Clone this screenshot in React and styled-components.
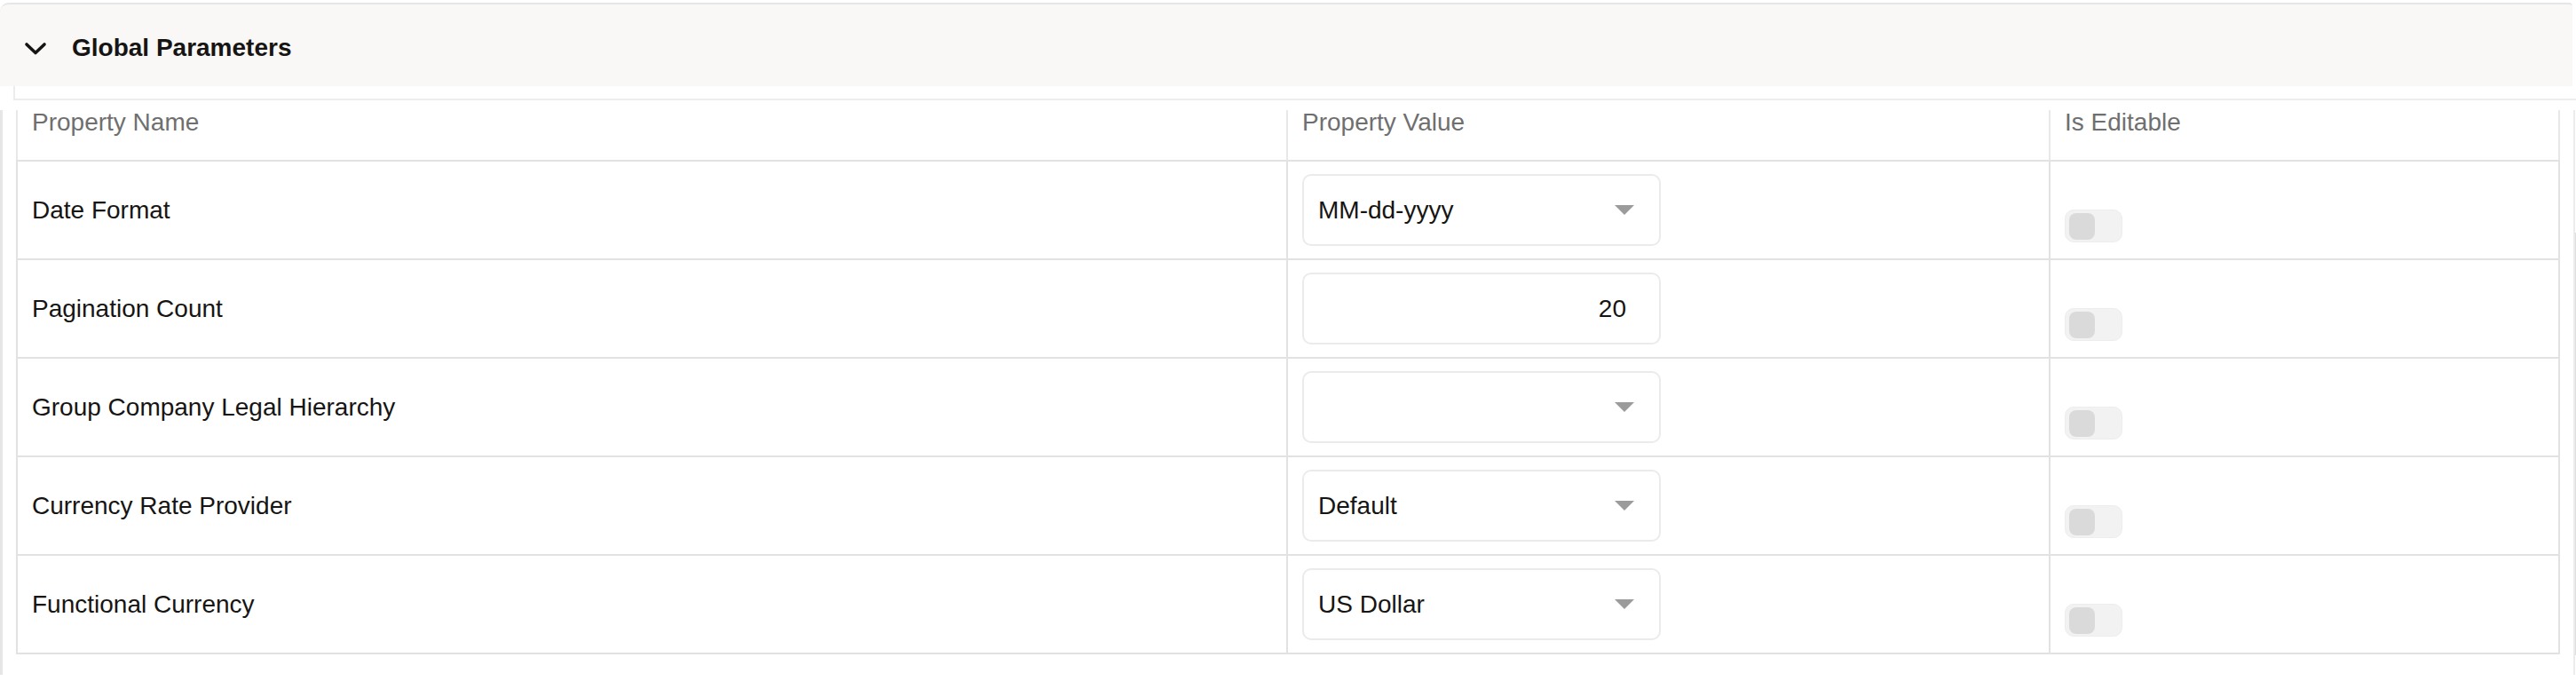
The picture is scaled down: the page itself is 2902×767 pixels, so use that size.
import React from "react";
import styled, { createGlobalStyle } from "styled-components";

const GlobalStyle = createGlobalStyle`
  html, body {
    margin: 0;
    padding: 0;
    background: #ffffff;
    font-family: "Liberation Sans", Arial, sans-serif;
    color: #161513;
  }
`;

const rows = [
  { name: "Date Format", kind: "select", value: "MM-dd-yyyy" },
  { name: "Pagination Count", kind: "number", value: "20" },
  { name: "Group Company Legal Hierarchy", kind: "select", value: "" },
  { name: "Currency Rate Provider", kind: "select", value: "Default" },
  { name: "Functional Currency", kind: "select", value: "US Dollar" },
];

const App = () => {
  return (
    <>
      <GlobalStyle />
      <Section>
        <SectionHeader>
          <Chevron width="26" height="16" viewBox="0 0 26 16">
            <polyline points="3,3 13,12.5 23,3" />
          </Chevron>
          <SectionTitle>Global Parameters</SectionTitle>
        </SectionHeader>

        <StickyEdge />

        <ScrollArea>
          <LeftRail />
          <Table>
            <colgroup>
              <col style={{ width: 1431 }} />
              <col style={{ width: 859 }} />
              <col style={{ width: 574 }} />
            </colgroup>
            <thead>
              <tr>
                <HeadCell>Property Name</HeadCell>
                <HeadCell>Property Value</HeadCell>
                <HeadCell>Is Editable</HeadCell>
              </tr>
            </thead>
            <tbody>
              {rows.map((row) => (
                <tr key={row.name}>
                  <Cell>{row.name}</Cell>
                  <Cell>
                    {row.kind === "number" ? (
                      <Field $align="right">{row.value}</Field>
                    ) : (
                      <Field>
                        <FieldText>{row.value}</FieldText>
                        <Caret />
                      </Field>
                    )}
                  </Cell>
                  <Cell>
                    <Toggle>
                      <Knob />
                    </Toggle>
                  </Cell>
                </tr>
              ))}
            </tbody>
          </Table>
          <ScrollBar>
            <Thumb />
          </ScrollBar>
        </ScrollArea>
      </Section>
    </>
  );
};

const Section = styled.div`
  padding-top: 3px;
  display: flex;
  flex-direction: column;
`;

const SectionHeader = styled.div`
  display: flex;
  align-items: center;
  gap: 28px;
  box-sizing: border-box;
  height: 94px;
  margin-right: 4px;
  padding: 6px 0 0 27px;
  background: #f9f8f7;
  border-top: 2px solid #e6e6e6;
  border-top-left-radius: 10px;
  border-top-right-radius: 4px;
`;

const Chevron = styled.svg`
  flex: none;
  fill: none;
  stroke: #161513;
  stroke-width: 3.6;
  stroke-linecap: round;
  stroke-linejoin: round;
  margin-top: 2px;
`;

const SectionTitle = styled.h2`
  margin: 0;
  font-size: 28px;
  font-weight: 700;
  color: #161513;
`;

const StickyEdge = styled.div`
  height: 14px;
  margin-left: 15px;
  border-left: 2px solid #ececec;
  border-bottom: 2px solid #ececec;
`;

const ScrollArea = styled.div`
  display: flex;
  align-items: flex-start;
  margin-top: 11px;
  height: 636px;
`;

const LeftRail = styled.div`
  flex: none;
  width: 3px;
  align-self: stretch;
  background: #e6e6e6;
`;

const Table = styled.table`
  flex: none;
  margin-left: 15px;
  width: 2864px;
  table-layout: fixed;
  border-collapse: collapse;
  font-size: 28px;
`;

const HeadCell = styled.th`
  height: 56px;
  padding: 0 16px;
  text-align: left;
  vertical-align: top;
  font-weight: 400;
  color: #6f6f6f;
  line-height: 28px;
  border-left: 2px solid #e8e8e8;
  border-right: 2px solid #e8e8e8;
  border-bottom: 2px solid #e2e2e2;
`;

const Cell = styled.td`
  height: 109px;
  padding: 0 16px;
  vertical-align: middle;
  color: #161513;
  border: 2px solid #e2e2e2;
`;

const Field = styled.div`
  display: flex;
  align-items: center;
  justify-content: ${(props) => (props.$align === "right" ? "flex-end" : "space-between")};
  box-sizing: border-box;
  width: 404px;
  height: 81px;
  padding: ${(props) => (props.$align === "right" ? "0 37px 0 16px" : "0 28px 0 16px")};
  border: 2px solid #ebebeb;
  border-radius: 10px;
  background: #ffffff;
  font-size: 28px;
  color: #161513;
`;

const FieldText = styled.span`
  white-space: nowrap;
`;

const Caret = styled.span`
  width: 0;
  height: 0;
  border-left: 11px solid transparent;
  border-right: 11px solid transparent;
  border-top: 11px solid #9b9b9b;
`;

const Toggle = styled.div`
  box-sizing: border-box;
  display: flex;
  align-items: center;
  width: 65px;
  height: 37px;
  margin-top: 36px;
  padding: 0 4px;
  background: #f2f2f2;
  border: 1px solid #ededed;
  border-radius: 10px;
`;

const Knob = styled.div`
  width: 29px;
  height: 30px;
  background: #dadada;
  border-radius: 8px;
`;

const ScrollBar = styled.div`
  flex: none;
  align-self: stretch;
  display: flex;
  flex-direction: column;
  width: 5px;
  margin-left: 15px;
  border-left: 2px solid #ececec;
`;

const Thumb = styled.div`
  margin-top: 138px;
  height: 476px;
  background: #e0e0e0;
`;

export default App;
